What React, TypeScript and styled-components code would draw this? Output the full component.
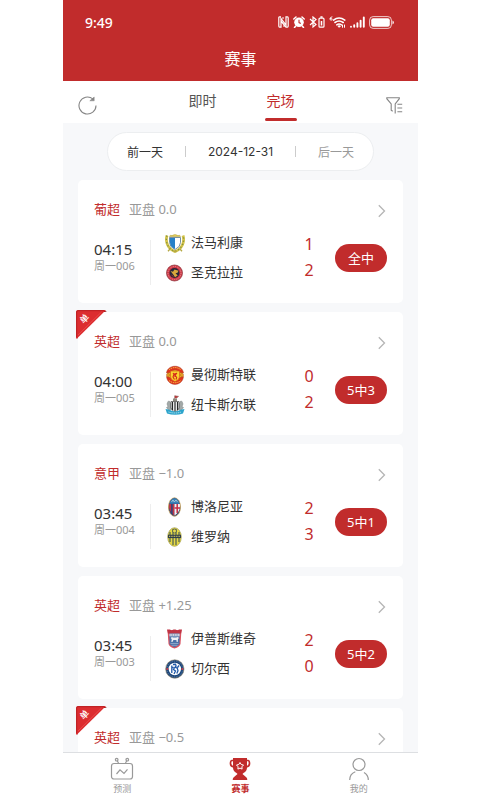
import React from "react";
import styled, { createGlobalStyle } from "styled-components";

const RED = "#c12c2c";

const GlobalStyle = createGlobalStyle`
  * { box-sizing: border-box; }
  body {
    margin: 0;
    background: #fff;
    color: #333;
    font-family: "Noto Sans", "Noto Sans CJK SC", sans-serif;
  }
  button {
    margin: 0;
    padding: 0;
    border: 0;
    background: none;
    color: inherit;
    font: inherit;
    cursor: pointer;
  }
  svg { display: block; flex: none; }
`;

const Page = styled.div`
  height: 100vh;
  padding: 0 62px 0 63px;
`;

const Phone = styled.div`
  display: flex;
  flex-direction: column;
  height: 100%;
  overflow: hidden;
  background: #f7f8fa;
`;

const Header = styled.header`
  flex: none;
  padding-bottom: 7px;
  background: ${RED};
  color: #fff;
`;

const StatusBar = styled.div`
  display: flex;
  align-items: center;
  justify-content: space-between;
  height: 44px;
  padding: 0 24px 0 22px;
`;

const Clock = styled.span`
  font-size: 14px;
  font-weight: 500;
`;

const StatusIcons = styled.div`
  display: flex;
  align-items: center;
  gap: 4px;
`;

const Title = styled.h1`
  margin: 0;
  font-size: 16px;
  font-weight: 400;
  line-height: 30px;
  text-align: center;
`;

const TabBar = styled.div`
  display: flex;
  flex: none;
  align-items: center;
  justify-content: space-between;
  height: 42px;
  padding: 0 15px;
  background: #fff;
`;

const Tabs = styled.div`
  display: flex;
  align-self: stretch;
  gap: 46px;
`;

const Tab = styled.button<{ $active?: boolean }>`
  display: flex;
  flex-direction: column;
  align-items: center;
  justify-content: space-between;
  width: 32px;
  padding: 10px 0 2px;
  color: ${(p) => (p.$active ? RED : "#555")};
  font-size: 14px;
  line-height: 20px;

  &::after {
    content: "";
    width: 32px;
    height: 3px;
    border-radius: 2px;
    background: ${(p) => (p.$active ? RED : "transparent")};
  }
`;

const IconButton = styled.button`
  padding-top: 6px;
`;

const Content = styled.main`
  flex: 1;
  min-height: 0;
  padding: 9px 15px 0;
  overflow-y: auto;
  scrollbar-width: none;
`;

const DatePill = styled.div`
  display: flex;
  align-items: center;
  justify-content: space-between;
  height: 39px;
  margin: 0 29px 9px;
  padding: 0 19px;
  border: 1px solid #eceef0;
  border-radius: 20px;
  background: #fff;
  font-size: 12px;
`;

const DateButton = styled.button<{ $muted?: boolean }>`
  color: ${(p) => (p.$muted ? "#999" : "#333")};
`;

const DateValue = styled.time`
  font-family: Inter, sans-serif;
`;

const Separator = styled.span`
  width: 1px;
  height: 11px;
  background: #ccc;
`;

const MatchList = styled.div`
  display: flex;
  flex-direction: column;
  gap: 9px;
`;

const Card = styled.article`
  position: relative;
  padding: 18px 16px 15px;
  border-radius: 5px;
  background: #fff;
`;

const Ribbon = styled.svg`
  position: absolute;
  top: -2px;
  left: -2px;
`;

const CardHeader = styled.div`
  display: flex;
  height: 20px;
  align-items: flex-end;
  font-size: 13px;
  line-height: 18px;
`;

const League = styled.span`
  margin-right: 9px;
  color: ${RED};
`;

const Handicap = styled.span`
  flex: 1;
  color: #999;
`;

const CardBody = styled.div`
  display: flex;
  align-items: center;
  height: 60px;
  margin-top: 10px;
`;

const Kickoff = styled.div`
  width: 56px;
  padding-bottom: 4px;
`;

const Time = styled.div`
  font-size: 15px;
  line-height: 20px;
`;

const MatchNo = styled.div`
  color: #999;
  font-size: 11px;
  line-height: 14px;
`;

const Divider = styled.span`
  align-self: flex-end;
  width: 1px;
  height: 45px;
  margin: 0 14px 3px 0;
  background: #eee;
`;

const Teams = styled.div`
  flex: 1;
`;

const Team = styled.div`
  display: flex;
  align-items: center;
  gap: 6px;
  height: 30px;
`;

const TeamName = styled.span`
  padding-bottom: 2px;
  font-size: 13px;
  line-height: 20px;
`;

const Scores = styled.div`
  width: 10px;
  margin-right: 21px;
  padding-bottom: 2px;
  color: ${RED};
  font-size: 16px;
  line-height: 26px;
  text-align: center;
`;

const Result = styled.span`
  width: 52px;
  border-radius: 14px;
  background: ${RED};
  color: #fff;
  font-size: 13px;
  line-height: 28px;
  text-align: center;
`;

const BottomNav = styled.nav`
  display: grid;
  flex: none;
  grid-template-columns: repeat(3, 1fr);
  height: 48px;
  border-top: 1px solid #dddfe2;
  background: #fff;
`;

const NavLink = styled.a<{ $active?: boolean }>`
  display: flex;
  flex-direction: column;
  align-items: center;
  padding-top: 4px;
  color: ${(p) => (p.$active ? RED : "#999")};
  font-size: 9px;
  font-weight: ${(p) => (p.$active ? 700 : 400)};
  line-height: 16px;
  text-decoration: none;
`;

function NfcIcon() {
  return (
    <svg width="11" height="12" viewBox="0 0 11 12" fill="none" stroke="#fff">
      <path d="M3 .8H1.5Q.8 .8 .8 2v8q0 1.2.7 1.2H3V2.5l5 6.5V.8h1.5q.7 0 .7 1.2v8q0 1.2-.7 1.2H8L3 5" strokeWidth="1.2" />
      <path d="M5 1v2M6 9v2" />
    </svg>
  );
}

function AlarmIcon() {
  return (
    <svg width="12" height="12" viewBox="0 0 12 12" fill="none">
      <circle cx="6" cy="6.3" r="4.8" fill="#fff" />
      <path d="M.8 3 3 1M11.2 3 9 1M2.5 10.2l-1 1.3M9.5 10.2l1 1.3" stroke="#fff" strokeWidth="1.5" strokeLinecap="round" />
      <path d="M6 3.8v2.8l1.8 1" stroke={RED} strokeWidth="1.1" />
    </svg>
  );
}

function BluetoothIcon() {
  return (
    <svg width="16" height="12" viewBox="0 0 16 12" fill="none" stroke="#fff">
      <path d="m1 3 6 5.5-3 2.5V1l3 2.5L1 9" strokeWidth="1.2" />
      <rect x="10" y="2.2" width="5" height="9" rx="1" strokeWidth="1.2" />
      <path d="M11.4 1h2.2M12.5 5v4.5" strokeWidth="1.5" />
    </svg>
  );
}

function WifiIcon() {
  return (
    <svg width="17" height="12" viewBox="0 0 17 12" fill="none" stroke="#fff" strokeLinecap="round">
      <path d="M3 .8Q1 1 1 3q0 1.2 1.1 1.2T3.2 3Q3.2 2 1.2 2.4" strokeWidth=".9" />
      <path d="M4.500 4.100Q10 0 15.800 4.100M6 6.500q4-3 8.200 0M7.800 8.800q2.200-1.600 4.600 0" strokeWidth="1.6" />
      <circle cx="10.1" cy="10.4" r=".8" fill="#fff" />
      <path d="M13.5 9v2.3M15.5 9v2.3" strokeWidth="1" />
    </svg>
  );
}

function SignalIcon() {
  return (
    <svg width="15" height="12" viewBox="0 0 15 12" stroke="#fff" strokeWidth="1.9" strokeLinecap="round">
      <path d="M1 10.7v.1M4.2 9.3v1.5M7.4 7.2v3.6M10.6 4.6v6.2M13.8 1.5v9.3" />
    </svg>
  );
}

function BatteryIcon() {
  return (
    <svg width="25" height="13" viewBox="0 0 25 13">
      <rect x=".6" y=".6" width="21.8" height="11.8" rx="3.5" fill="none" stroke="#fff" strokeOpacity=".75" />
      <rect x="2.2" y="2.2" width="18.6" height="8.6" rx="2" fill="#fff" />
      <path d="M23.5 4.5q1.3.6 1.3 2t-1.3 2z" fill="#fff" />
    </svg>
  );
}

function RefreshIcon() {
  return (
    <svg width="19" height="19" viewBox="0 0 19 19" fill="none" stroke="#858585" strokeWidth="1.1">
      <path d="M18 9.500A8.500 8.500 0 1 1 14.800 2.900" />
      <path d="M16.200 1v3.800h-4.400z" fill="#858585" strokeWidth=".5" />
    </svg>
  );
}

function FilterIcon() {
  return (
    <svg width="17" height="17" viewBox="0 0 17 17" fill="none" stroke="#858585" strokeWidth="1.1">
      <path d="M9.2 16.4V7L13.3 1.7V.7H.8v1L5.2 7v6.2l1.5 1.1" />
      <path d="M11.4 7.3h4.8M11.4 11h4.8M11.4 14.7h4.8" />
    </svg>
  );
}

function Chevron() {
  return (
    <svg width="10" height="14" viewBox="0 0 10 14" fill="none" stroke="#b5b5b5" strokeWidth="1.3">
      <path d="m1.8 1.3 5.7 5.7-5.7 5.7" />
    </svg>
  );
}

function SingleRibbon() {
  return (
    <Ribbon width="31" height="30" viewBox="0 0 31 30" role="img" aria-label="单">
      <path d="M27 2V0l4 2zM2 25H0l2 4z" fill="#811" />
      <path d="M0 2Q0 0 2 0h28L1 28.500H0z" fill="#dc2d30" />
      <path d="M.7 27V2Q.7.7 2 .7h26" fill="none" stroke="#bb2023" />
      <path d="M25.500 2 2 25" stroke="#ef5552" strokeWidth=".7" />
      <text x="8.500" y="12" transform="rotate(-45 8.500 9)" textAnchor="middle" fill="#fff" fontSize="9" fontWeight="500">
        单
      </text>
    </Ribbon>
  );
}

type CrestName = "famalicao" | "santaClara" | "manUtd" | "newcastle" | "bologna" | "verona" | "ipswich" | "chelsea";

const crests: Record<CrestName, React.ReactNode> = {
  famalicao: (
    <>
      <path d="M2 2.500C0 9 3 16 10 18.500 17 16 20 9 18 2.500" fill="none" stroke="#d3c34a" strokeWidth="2.800" />
      <path d="M2 2.500C0 9 3 16 10 18.500 17 16 20 9 18 2.500" fill="none" stroke="#84913f" strokeWidth="1.300" strokeDasharray="1.300 2" />
      <path d="M4.500 3.500Q5 1.500 7 2.600 10 .5 13 2.600 15 1.500 15.500 3.500z" fill="#e8cf55" stroke="#a99a3a" strokeWidth=".5" />
      <path d="M4.500 4.500h11v5q0 4.500-5.500 7-5.500-2.500-5.500-7z" fill="#fff" stroke="#557386" strokeWidth=".8" />
      <path d="M5 5h5v11q-5-2.500-5-6.500z" fill="#2680c8" />
      <path d="m5 16-2 2.300M15 16l2 2.300M8.500 18.500h3" stroke="#b5a944" strokeWidth="1.300" />
    </>
  ),
  santaClara: (
    <>
      <circle cx="9.500" cy="10" r="8" fill="#cf3442" stroke="#93424a" strokeWidth=".8" />
      <circle cx="9.500" cy="10" r="6.500" fill="none" stroke="#e69a9f" strokeWidth="1" strokeDasharray="1 .9" />
      <circle cx="9.500" cy="10" r="5" fill="#27283a" />
      <path d="m5.500 8 2.500.8L9.500 6.500l4 1.300-1 2-2 .4 2.200 2.300-2.700 1.800-1.400-2.400z" fill="#d8a83c" />
      <path d="m6.500 12 2 1.500" stroke="#a82e30" />
    </>
  ),
  manUtd: (
    <>
      <circle cx="10" cy="10" r="8" fill="#efb92a" />
      <path d="M1.500 8C2.500-1 17.500-1 18.500 8l-3.500-.5Q10 2 5 7.500z" fill="#e0331f" stroke="#a93a1c" strokeWidth=".5" />
      <path d="M1.500 11.500C2.500 22 17.500 22 18.500 11.500l-3.500 1Q10 17 5 12.500z" fill="#e0331f" stroke="#a93a1c" strokeWidth=".5" />
      <path d="M4 4.800Q10 .3 16 4.800M4 15.500Q10 20 16 15.500" fill="none" stroke="#f8c945" strokeWidth="1" strokeDasharray="1.400 .8" />
      <path d="M5.500 6h9v5q0 4-4.500 5.500Q5.500 15 5.500 11z" fill="#f9d42f" stroke="#d35a1c" strokeWidth=".7" />
      <path d="m8 8 1 1.300L8 12l1.500 2.500M12 8l-2 2 1.700 2.500-.7 2M10 8v4" fill="none" stroke="#d5281a" strokeWidth="1.100" />
      <circle cx="3" cy="10" r="1.500" fill="#e9ad27" stroke="#b0551b" strokeWidth=".5" />
      <circle cx="17" cy="10" r="1.500" fill="#e9ad27" stroke="#b0551b" strokeWidth=".5" />
    </>
  ),
  newcastle: (
    <>
      <path d="M9.500 5V.5M10 .8l3.500.6-2 1.700H10" fill="#c8343b" stroke="#8b4b47" strokeWidth=".6" />
      <path d="M8 3.500h4v3H8z" fill="#8c897e" />
      <path d="M2 9q1.500-5 3-2l1.200 2v5.500L3.500 15 1.500 12.500l1.500-1zM18 9q-1.500-5-3-2l-1.200 2v5.500l2.700.5 2-2.500-1.500-1z" fill="#a3a9a8" stroke="#7b8283" strokeWidth=".5" />
      <path d="M6 6.500h8V13q-1 3-4 4-3-1-4-4z" fill="#fff" stroke="#444" strokeWidth=".7" />
      <path d="M7.500 7v8M10 7v9.500M12.500 7v8" stroke="#252727" strokeWidth="1.200" />
      <path d="m.5 14 4 .8Q10 18 15.500 14.800l4-.8-1.500 4.500Q10 21 2 18.500z" fill="#2ca4cc" />
      <path d="M3.500 17q6.500 2 13 0" fill="none" stroke="#d8edf2" strokeWidth=".8" strokeDasharray="1.200 .7" />
    </>
  ),
  bologna: (
    <>
      <ellipse cx="9.500" cy="10" rx="6" ry="9.200" fill="#263f78" stroke="#c49d53" strokeWidth=".8" />
      <path d="M4.300 7h5.200v11.500Q5 16 4 10z" fill="#c63645" />
      <path d="M6.900 7v10" stroke="#244780" strokeWidth="1.500" />
      <path d="M9.500 7h5.400q.7 8-5.400 11.500z" fill="#f4f1f1" />
      <path d="M12.200 7v9M9.500 11H15" stroke="#c72c43" strokeWidth="1.500" />
      <path d="M4.500 6.700Q6 1.200 9.500 1.200t5 5.500z" fill="#3981b7" />
      <path d="m6.500 5 1.500-2 1.300 2L11 3l1.500 2" fill="none" stroke="#b7d3e3" strokeWidth=".8" />
    </>
  ),
  verona: (
    <>
      <ellipse cx="9.500" cy="10" rx="6.800" ry="9.300" fill="#e6d845" stroke="#8f8b40" strokeWidth=".6" />
      <path d="M5 5v10M8 2v16M11 2v16M14 5v10" stroke="#3d5358" strokeWidth="1.100" />
      <circle cx="9.500" cy="4" r="2" fill="#e5d94d" stroke="#3a4b51" strokeWidth=".7" />
      <path d="M3 7.700h13v3.400H3z" fill="#303e49" />
      <path d="M4 9.400h11" stroke="#bfb95f" strokeWidth="1.200" strokeDasharray="1 .7" />
    </>
  ),
  ipswich: (
    <>
      <path d="M2.500 1h14l-1 14q-1 3-6 4.500Q4.500 18 3.500 15z" fill="#d95462" />
      <path d="M2 .5h3l1.500 1 2-1h2l2 1 1.500-1h3L16 4.500H3z" fill="#c03444" />
      <path d="M4.500 4.500h10V15q-1.500 2-5 3.300Q6 17 4.500 15z" fill="#4a72a9" />
      <path d="M4.500 4.800h10v2.500h-10z" fill="#e4e4eb" />
      <path d="M5.500 6h8" stroke="#425f91" strokeDasharray="1 .7" />
      <path d="m5.500 9 1.500-1 1 .5h3L13 8l1 1-1 1-.3 3h-1l-.3-2h-3l-1 2h-1l.3-3z" fill="#f1f1f4" />
      <path d="M5.500 14.500h8M6.500 16.300h6" stroke="#92a6c8" strokeWidth=".9" />
    </>
  ),
  chelsea: (
    <>
      <circle cx="9.800" cy="10" r="9.200" fill="#1d477b" stroke="#948569" strokeWidth=".6" />
      <circle cx="9.800" cy="10" r="7.900" fill="none" stroke="#6e8cae" strokeWidth=".7" strokeDasharray="1.200 1.200" />
      <circle cx="9.800" cy="10" r="6.200" fill="#fff" />
      <path d="m8 5.500 2.500-.2.600 1.700-1 1.200 2.200 1 .7 2.600-1.200 2.700M9.500 8.500l-1 2 2 1.500-1.500 3M7 9l1.500-1M12.500 8.500 14 6.500M6.800 6.500V14" fill="none" stroke="#205aa8" strokeWidth="1.300" />
      <circle cx="2.300" cy="10" r="1.100" fill="#c93948" />
      <circle cx="17.300" cy="10" r="1.100" fill="#c93948" />
    </>
  ),
};

function Crest({ name }: { name: CrestName }) {
  return (
    <svg width="20" height="20" viewBox="0 0 20 20" aria-hidden="true">
      {crests[name]}
    </svg>
  );
}

function PredictIcon() {
  return (
    <svg width="24" height="24" viewBox="0 0 24 24" fill="none" stroke="#999" strokeWidth="1.2">
      <rect x="1.500" y="6.500" width="21" height="15.500" rx="2.500" />
      <path d="M6.500 17 10 12.800l4 3.700L17.500 12.300" />
      <path d="M8.500 6 7.200 3.800M15.500 6l1.300-2.200" />
      <circle cx="6.700" cy="2.700" r="1.300" />
      <circle cx="17.300" cy="2.700" r="1.300" />
    </svg>
  );
}

function TrophyIcon() {
  return (
    <svg width="24" height="24" viewBox="0 0 24 24" fill={RED}>
      <path d="M5 1h14v9.500q0 3.500-3.500 5.500L14.500 17l4 3.500q.8.600.8 2.500H4.700q0-1.900.8-2.500L9.500 17l-1-1Q5 14 5 10.500z" />
      <path d="M5.500 3.500H4Q2.500 3.500 2.500 6.500T5.800 9.800M18.500 3.500H20q1.500 0 1.500 3t-3.300 3.300" fill="none" stroke={RED} strokeWidth="1.700" />
      <path d="m12 5.500 1.200 2 2.300.5-1.600 1.800.2 2.300-2.100-1-2.100 1 .2-2.300L8.500 8l2.300-.5z" fill="none" stroke="#fff" strokeWidth="1" />
    </svg>
  );
}

function ProfileIcon() {
  return (
    <svg width="24" height="24" viewBox="0 0 24 24" fill="none" stroke="#999" strokeWidth="1.2">
      <circle cx="12" cy="7.500" r="6" />
      <path d="M2.700 23q0-6 5.600-8.200M17 15.500q4.300 2.500 4.300 7.500" />
    </svg>
  );
}

interface Side {
  name: string;
  crest: CrestName;
  score: number;
}

interface Match {
  league: string;
  handicap: string;
  time: string;
  no: string;
  result: string;
  single?: boolean;
  sides: Side[];
}

const matches: Match[] = [
  {
    league: "葡超", handicap: "0.0", time: "04:15", no: "周一006", result: "全中",
    sides: [
      { name: "法马利康", crest: "famalicao", score: 1 },
      { name: "圣克拉拉", crest: "santaClara", score: 2 },
    ],
  },
  {
    league: "英超", handicap: "0.0", time: "04:00", no: "周一005", result: "5中3", single: true,
    sides: [
      { name: "曼彻斯特联", crest: "manUtd", score: 0 },
      { name: "纽卡斯尔联", crest: "newcastle", score: 2 },
    ],
  },
  {
    league: "意甲", handicap: "−1.0", time: "03:45", no: "周一004", result: "5中1",
    sides: [
      { name: "博洛尼亚", crest: "bologna", score: 2 },
      { name: "维罗纳", crest: "verona", score: 3 },
    ],
  },
  {
    league: "英超", handicap: "+1.25", time: "03:45", no: "周一003", result: "5中2",
    sides: [
      { name: "伊普斯维奇", crest: "ipswich", score: 2 },
      { name: "切尔西", crest: "chelsea", score: 0 },
    ],
  },
];

function CardTop({ league, handicap, single }: Pick<Match, "league" | "handicap" | "single">) {
  return (
    <>
      {single && <SingleRibbon />}
      <CardHeader>
        <League>{league}</League>
        <Handicap>亚盘 {handicap}</Handicap>
        <button type="button" aria-label="查看详情">
          <Chevron />
        </button>
      </CardHeader>
    </>
  );
}

function MatchCard({ match }: { match: Match }) {
  return (
    <Card>
      <CardTop league={match.league} handicap={match.handicap} single={match.single} />
      <CardBody>
        <Kickoff>
          <Time>{match.time}</Time>
          <MatchNo>{match.no}</MatchNo>
        </Kickoff>
        <Divider />
        <Teams>
          {match.sides.map((side) => (
            <Team key={side.name}>
              <Crest name={side.crest} />
              <TeamName>{side.name}</TeamName>
            </Team>
          ))}
        </Teams>
        <Scores>
          {match.sides.map((side) => (
            <div key={side.name}>{side.score}</div>
          ))}
        </Scores>
        <Result>{match.result}</Result>
      </CardBody>
    </Card>
  );
}

export default function App() {
  return (
    <Page>
      <GlobalStyle />
      <Phone>
        <Header>
          <StatusBar>
            <Clock>9:49</Clock>
            <StatusIcons>
              <NfcIcon />
              <AlarmIcon />
              <BluetoothIcon />
              <WifiIcon />
              <SignalIcon />
              <BatteryIcon />
            </StatusIcons>
          </StatusBar>
          <Title>赛事</Title>
        </Header>
        <TabBar>
          <IconButton type="button" aria-label="刷新">
            <RefreshIcon />
          </IconButton>
          <Tabs>
            <Tab type="button">即时</Tab>
            <Tab type="button" $active>完场</Tab>
          </Tabs>
          <IconButton type="button" aria-label="筛选">
            <FilterIcon />
          </IconButton>
        </TabBar>
        <Content>
          <DatePill>
            <DateButton type="button">前一天</DateButton>
            <Separator />
            <DateValue dateTime="2024-12-31">2024-12-31</DateValue>
            <Separator />
            <DateButton type="button" $muted>后一天</DateButton>
          </DatePill>
          <MatchList>
            {matches.map((match) => (
              <MatchCard key={match.no} match={match} />
            ))}
            <Card>
              <CardTop league="英超" handicap="−0.5" single />
            </Card>
          </MatchList>
        </Content>
        <BottomNav>
          <NavLink href="#predict">
            <PredictIcon />
            预测
          </NavLink>
          <NavLink href="#matches" $active aria-current="page">
            <TrophyIcon />
            赛事
          </NavLink>
          <NavLink href="#me">
            <ProfileIcon />
            我的
          </NavLink>
        </BottomNav>
      </Phone>
    </Page>
  );
}
